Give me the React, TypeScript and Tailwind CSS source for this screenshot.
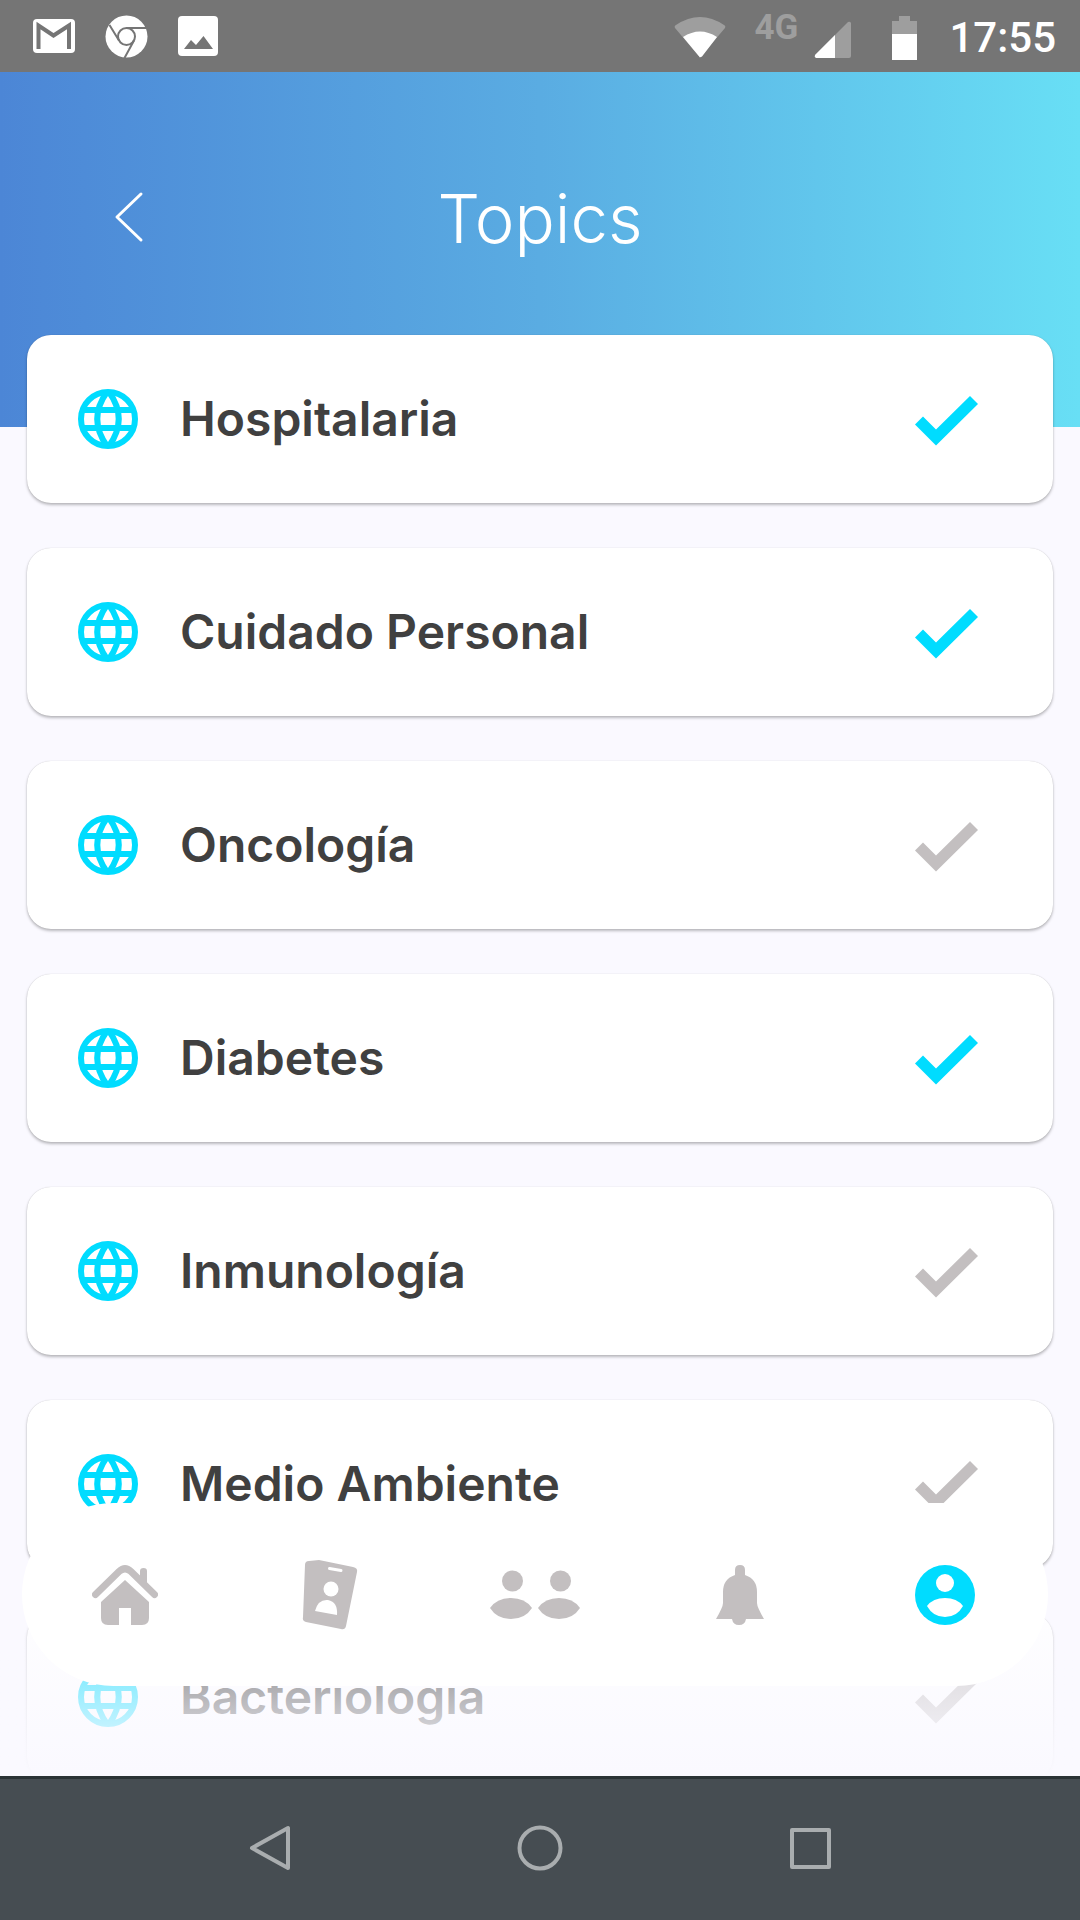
const topics = [
  { name: "Hospitalaria", selected: true },
  { name: "Cuidado Personal", selected: true },
  { name: "Oncología", selected: false },
  { name: "Diabetes", selected: true },
  { name: "Inmunología", selected: false },
  { name: "Medio Ambiente", selected: false },
  { name: "Bacteriología", selected: false },
];

function StatusBar() {
  return (
    <div className="relative z-10 flex h-[72px] shrink-0 items-center justify-between bg-[#757575] pl-8 pr-6 text-white">
      <div className="flex items-center gap-[30px]">
        <svg className="h-[36px] w-[43px]" viewBox="0 0 43 36">
          <rect x="1" y="1" width="42" height="34" rx="4" fill="#fff" />
          <path d="M6.500 31V7.500L21.500 17.500L37 7.500V31" fill="none" stroke="#757575" strokeWidth="4" />
        </svg>
        <svg className="size-[43px]" viewBox="0 0 43 43">
          <circle cx="21.500" cy="21.500" r="21" fill="#fff" />
          <g fill="none" stroke="#757575" strokeWidth="2">
            <circle cx="21.500" cy="21.500" r="8.500" />
            <path d="M21.500 13H42M14 25.500L4.500 10M29 25.500L19.500 43" />
          </g>
        </svg>
        <svg className="size-[40px]" viewBox="0 0 40 40">
          <rect width="40" height="40" rx="4" fill="#fff" />
          <path d="M6 33L13 24L18 29L25.500 20L35 33Z" fill="#757575" />
        </svg>
      </div>
      <div className="flex items-center pt-[3px]">
        <svg className="h-[42px] w-[52px]" viewBox="0 0 52 42">
          <path d="M26 40.500L1 11Q0 9 2 8Q26 -8 50 8Q52 9 51 11Z" fill="#9e9e9e" />
          <path d="M26 40.500L9 20Q26 9 43 20L28 39.500Q26 41 24 39.500Z" fill="#fff" />
        </svg>
        <span className="mb-5 ml-7 font-['Roboto',sans-serif] text-[35px] leading-8 font-bold text-[#9e9e9e]">4G</span>
        <svg className="ml-4 mt-1 size-[37px]" viewBox="0 0 37 37">
          <path d="M37 2V35Q37 37 35 37H2Q0 36 1 34L34 1Q36 0 37 2Z" fill="#9e9e9e" />
          <path d="M21 14V37H2Q0 36 1 34Z" fill="#fff" />
        </svg>
        <svg className="ml-[41px] h-[44px] w-[25px]" viewBox="0 0 25 44">
          <path d="M0 5H7V0H18V5H25V20H0Z" fill="#9e9e9e" />
          <path d="M0 18H25V44H0Z" fill="#fff" />
        </svg>
        <span className="ml-8 font-['Roboto',sans-serif] text-[42px] leading-[48px] font-medium">17:55</span>
      </div>
    </div>
  );
}

function Header() {
  return (
    <header className="grid h-[355px] shrink-0 grid-cols-[1fr_auto_1fr] items-start bg-linear-to-r from-[#4c86d6] via-[#5aace2] to-[#68dff5] px-[104px] pt-[105px] text-white">
      <button type="button" aria-label="Back" className="flex h-20 w-12 items-center">
        <svg className="h-[52px] w-[42px]" viewBox="0 0 42 52" fill="none" stroke="currentColor" strokeWidth="3" strokeLinecap="round" strokeLinejoin="round">
          <path d="M37 3L13 26L37 49" />
        </svg>
      </button>
      <h1 className="text-[67px] leading-[84px] font-light">Topics</h1>
    </header>
  );
}

function GlobeIcon() {
  return (
    <svg className="size-[60px] text-[#00dcff]" viewBox="0 0 60 60" fill="none" stroke="currentColor" strokeWidth="6">
      <circle cx="30" cy="30" r="27" />
      <path d="M4 21H56M4 39H56" />
      <path d="M29 3C16 21 16 39 29 57M31 3C44 21 44 39 31 57" />
    </svg>
  );
}

function TopicCard({ name, selected }: { name: string; selected: boolean }) {
  return (
    <li>
      <button
        type="button"
        aria-pressed={selected}
        className="flex h-[168px] w-full items-center rounded-3xl bg-white pl-[51px] pr-[75px] shadow-[0_2px_3px_rgba(0,0,0,0.26),0_0_1px_rgba(0,0,0,0.2)]"
      >
        <GlobeIcon />
        <span className="ml-[42px] text-[48px] leading-14 font-semibold text-[#404040]">{name}</span>
        <svg
          className={`ml-auto h-[54px] w-[63px] ${selected ? "text-[#00dcff]" : "text-[#c3bfc0]"}`}
          viewBox="0 0 63 54"
          fill="currentColor"
        >
          <path d="M0 32.500L8 24.500L21 37.500L55 4L63 12L21 53.500Z" />
        </svg>
      </button>
    </li>
  );
}

function HomeIcon() {
  return (
    <svg className="h-[60px] w-[66px]" viewBox="0 0 66 60" fill="currentColor">
      <path d="M3.500 29.500L27 6.500Q33 1 39 6.500L62.500 29.500" fill="none" stroke="currentColor" strokeWidth="7" strokeLinecap="round" />
      <path d="M48 16V6Q48 3 51.500 3Q55 3 55 6V23Z" />
      <path d="M33 15L57 37V53Q57 60 50 60H39V43H27V60H16Q9 60 9 53V37Z" />
    </svg>
  );
}

function BadgeIcon() {
  return (
    <svg className="h-[70px] w-[56px]" viewBox="0 0 56 70" fill="currentColor">
      <path d="M3 5Q3 1 7 1L17 0L51 7Q56 8 55 12L44 66Q43 70 39 69L4 62Q0 61 1 57Z" />
      <path d="M27.500 8.500L39 10.500" stroke="#fff" strokeWidth="3" strokeLinecap="round" />
      <circle cx="29" cy="29" r="7.500" fill="#fff" />
      <path d="M13 51Q16 39 26 40Q36 42 35 55Z" fill="#fff" />
    </svg>
  );
}

function PeopleIcon() {
  return (
    <svg className="h-[50px] w-[90px]" viewBox="0 0 90 50" fill="currentColor">
      <circle cx="22.500" cy="11" r="10.500" />
      <circle cx="70.500" cy="11" r="10.500" />
      <path d="M0 38Q7 28 21 28Q35 28 42 38Q35 49 21 49Q7 49 0 38Z" />
      <path d="M48 38Q55 28 69 28Q83 28 90 38Q83 49 69 49Q55 49 48 38Z" />
    </svg>
  );
}

function BellIcon() {
  return (
    <svg className="h-[60px] w-[48px]" viewBox="0 0 48 60" fill="currentColor">
      <path d="M19 10V5Q19 0 24 0Q29 0 29 5V10Q41 14 41 27V38Q41 42 48 54H30Q29 60 23 60Q17 60 16 54H0Q7 42 7 38V27Q7 14 19 10Z" />
    </svg>
  );
}

function ProfileIcon() {
  return (
    <svg className="size-[60px]" viewBox="0 0 60 60" fill="currentColor">
      <circle cx="30" cy="30" r="30" />
      <circle cx="30" cy="18" r="9" fill="#fff" />
      <path d="M12 41Q18 33 30 33Q42 33 48 41Q42 52 30 52Q18 52 12 41Z" fill="#fff" />
    </svg>
  );
}

const tabs = [
  { label: "Home", Icon: HomeIcon, active: false },
  { label: "Badge", Icon: BadgeIcon, active: false },
  { label: "People", Icon: PeopleIcon, active: false },
  { label: "Notifications", Icon: BellIcon, active: false },
  { label: "Profile", Icon: ProfileIcon, active: true },
];

function TabBar() {
  return (
    <div className="pointer-events-none absolute inset-x-0 bottom-0">
      {/* list fades out behind the bar */}
      <div className="absolute inset-x-0 bottom-0 h-[220px] bg-linear-to-b from-[#faf9ff]/0 to-[#faf9ff]" />
      <nav className="pointer-events-auto relative mb-[90px] ml-[22px] mr-8 flex h-[183px] rounded-full bg-white pt-[1px]">
        {tabs.map(({ label, Icon, active }) => (
          <button
            key={label}
            type="button"
            aria-label={label}
            className={`flex flex-1 items-center justify-center ${active ? "text-[#00dcff]" : "text-[#c3bfc0]"}`}
          >
            <Icon />
          </button>
        ))}
      </nav>
    </div>
  );
}

function SystemNav() {
  return (
    <div className="flex h-36 shrink-0 items-center justify-center gap-[226px] border-t-[3px] border-[#2b3336] bg-[#464d52] pb-[3px] text-[#a9adaf]">
      <button type="button" aria-label="System back">
        <svg className="size-[46px]" viewBox="0 0 46 46" fill="none" stroke="currentColor" strokeWidth="4" strokeLinejoin="round">
          <path d="M43 3V43L7 23Z" />
        </svg>
      </button>
      <button type="button" aria-label="System home">
        <svg className="size-[46px]" viewBox="0 0 46 46" fill="none" stroke="currentColor" strokeWidth="4">
          <circle cx="23" cy="23" r="20.500" />
        </svg>
      </button>
      <button type="button" aria-label="Recent apps">
        <svg className="size-[46px]" viewBox="0 0 46 46" fill="none" stroke="currentColor" strokeWidth="4" strokeLinejoin="round">
          <path d="M3 5H40V42H3Z" />
        </svg>
      </button>
    </div>
  );
}

export default function App() {
  return (
    <div className="flex h-screen flex-col bg-[#faf9ff] font-['Inter',sans-serif]">
      <StatusBar />
      <div className="relative min-h-0 flex-1 overflow-hidden">
        <Header />
        <ul className="-mt-[92px] flex flex-col gap-[45px] px-[27px]">
          {topics.map((topic) => (
            <TopicCard key={topic.name} {...topic} />
          ))}
        </ul>
        <TabBar />
      </div>
      <SystemNav />
    </div>
  );
}
